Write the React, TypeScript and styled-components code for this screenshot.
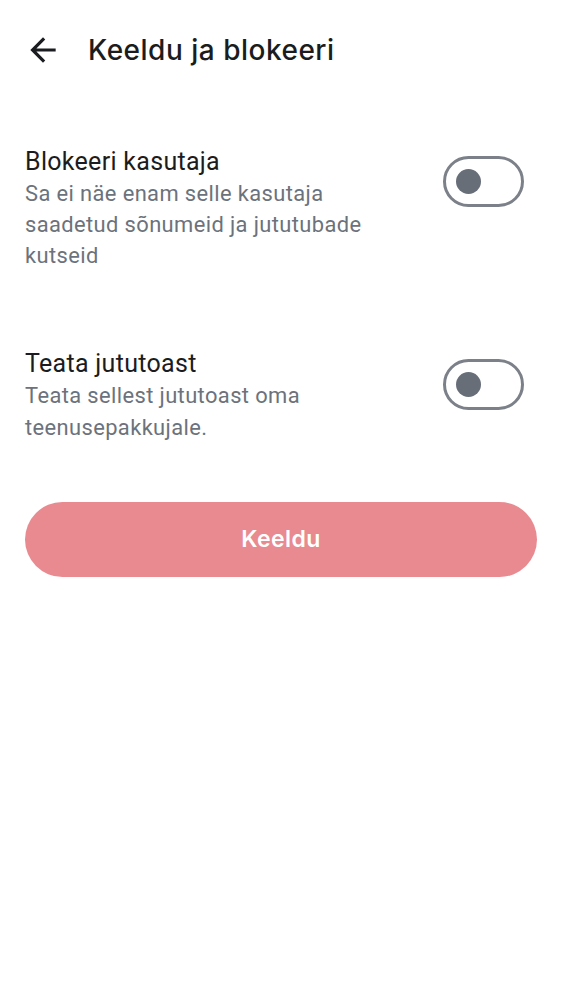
import React from "react";
import styled, { createGlobalStyle } from "styled-components";

const Global = createGlobalStyle`
  html, body { margin: 0; padding: 0; background: #ffffff; }
  body { font-family: Roboto, "Noto Sans", sans-serif; }
`;

const Page = styled.div`
  width: 562px;
  min-height: 1000px;
  background: #ffffff;
  display: flex;
  flex-direction: column;
`;

const Header = styled.header`
  height: 100px;
  display: flex;
  align-items: center;
  padding-left: 24px;
  gap: 26px;
`;

const BackButton = styled.button`
  width: 38px;
  height: 38px;
  border: none;
  background: transparent;
  padding: 0;
  display: flex;
  align-items: center;
  justify-content: center;
  color: #1b1c20;
`;

const Title = styled.h1`
  margin: 0;
  font-family: Inter, Roboto, sans-serif;
  font-size: 28px;
  font-weight: 500;
  color: #1b1c20;
  letter-spacing: 0.5px;
`;

const List = styled.div`
  display: flex;
  flex-direction: column;
  gap: 81px;
  padding-top: 49.5px;
`;

const Row = styled.div`
  display: flex;
  align-items: flex-start;
  gap: 48px;
  padding: 0 37.7px 0 25px;
`;

const TextCol = styled.div`
  flex: 1;
  display: flex;
  flex-direction: column;
`;

const RowTitle = styled.div`
  font-size: 25px;
  line-height: 24px;
  letter-spacing: 0.3px;
  color: #1b1c20;
`;

const RowDesc = styled.div`
  margin-top: 4px;
  font-size: 21.9px;
  line-height: 31.25px;
  letter-spacing: 0.39px;
  color: #6c727b;
`;

const Switch = styled.div`
  margin-top: 6.5px;
  width: 81px;
  height: 51px;
  box-sizing: border-box;
  border: 3px solid #7b8089;
  border-radius: 26px;
  display: flex;
  align-items: center;
  padding-left: 10px;
  flex-shrink: 0;
`;

const Knob = styled.div`
  width: 25px;
  height: 25px;
  border-radius: 50%;
  background: #676e78;
`;

const Action = styled.button`
  margin: 59px 25px 0;
  height: 75px;
  border: none;
  border-radius: 38px;
  background: #e88a90;
  color: #ffffff;
  font-family: Inter, Roboto, sans-serif;
  font-size: 23px;
  font-weight: 600;
  letter-spacing: 0.4px;
`;

const items = [
  {
    title: "Blokeeri kasutaja",
    desc: "Sa ei näe enam selle kasutaja saadetud sõnumeid ja jututubade kutseid",
  },
  {
    title: "Teata jututoast",
    desc: "Teata sellest jututoast oma teenusepakkujale.",
  },
];

export default function App() {
  return (
    <Page>
      <Global />
      <Header>
        <BackButton aria-label="Tagasi">
          <svg width="38" height="38" viewBox="0 0 24 24" fill="none">
            <path
              d="M20 11H7.83l5.59-5.59L12 4l-8 8 8 8 1.41-1.41L7.83 13H20v-2z"
              fill="currentColor"
            />
          </svg>
        </BackButton>
        <Title>Keeldu ja blokeeri</Title>
      </Header>
      <List>
        {items.map((it) => (
          <Row key={it.title}>
            <TextCol>
              <RowTitle>{it.title}</RowTitle>
              <RowDesc>{it.desc}</RowDesc>
            </TextCol>
            <Switch>
              <Knob />
            </Switch>
          </Row>
        ))}
      </List>
      <Action>Keeldu</Action>
    </Page>
  );
}
